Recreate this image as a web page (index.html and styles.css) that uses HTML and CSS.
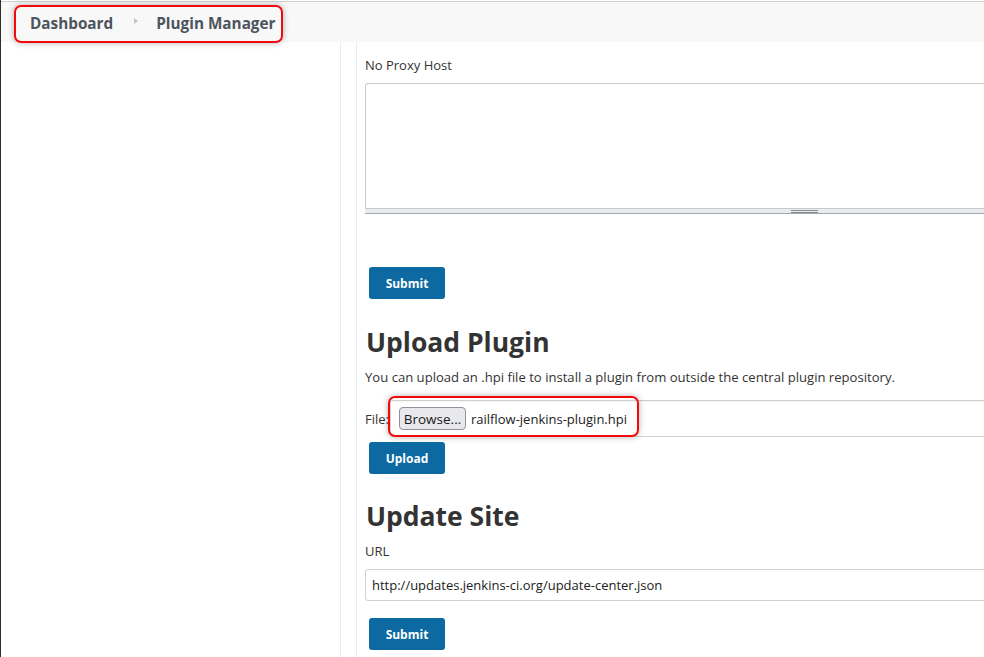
FILE: index.html
```html
<!DOCTYPE html>
<html lang="en">
<head>
<meta charset="utf-8">
<title>Plugin Manager</title>
<link rel="stylesheet" href="styles.css">
</head>
<body>
<div class="page">
  <header class="crumbs">
    <span class="crumb">Dashboard</span>
    <span class="sep"></span>
    <span class="crumb">Plugin Manager</span>
    <div class="annot annot-crumbs"></div>
  </header>
  <div class="layout">
    <aside class="side"></aside>
    <main class="main">
      <div class="label">No Proxy Host</div>
      <div class="ta-wrap">
        <textarea class="ta"></textarea>
        <div class="grip-bar"><span class="grip"></span></div>
      </div>
      <button class="btn btn-proxy">Submit</button>

      <h2 class="title">Upload Plugin</h2>
      <p class="desc">You can upload an .hpi file to install a plugin from outside the central plugin repository.</p>
      <div class="file-row">
        <span class="file-label">File:</span>
        <div class="file-box">
          <span class="browse">Browse...</span>
          <span class="fname">railflow-jenkins-plugin.hpi</span>
        </div>
        <div class="annot annot-file"></div>
      </div>
      <button class="btn btn-upload">Upload</button>

      <h2 class="title title-site">Update Site</h2>
      <div class="label label-url">URL</div>
      <div class="url-box">http://updates.jenkins-ci.org/update-center.json</div>
      <button class="btn btn-site">Submit</button>
    </main>
  </div>
</div>
</body>
</html>
```
FILE: styles.css
```css
html, body {
  margin: 0;
  padding: 0;
  background: #fff;
  overflow: hidden;
}
body {
  font-family: "Open Sans", "Noto Sans", sans-serif;
  color: #333;
  font-size: 13px;
}
.page {
  position: relative;
  height: 657px;
  border-left: 1px solid #2d2d2d;
  padding-top: 1px;
  box-sizing: border-box;
}
.crumbs {
  position: relative;
  display: flex;
  align-items: center;
  height: 41px;
  border-top: 1px solid #cfcfcf;
  background: #f8f8f8;
  padding-left: 29px;
  box-sizing: border-box;
}
.crumb {
  font-weight: 700;
  font-size: 15.3px;
  color: #4d545d;
  line-height: 20px;
  margin-top: 2px;
}
.sep {
  width: 0;
  height: 0;
  border-top: 3.5px solid transparent;
  border-bottom: 3.5px solid transparent;
  border-left: 4px solid #c4c4c4;
  margin: -3px 18px 0 21px;
}
.annot {
  position: absolute;
  border: 2px solid #f20a0a;
  border-radius: 7px;
  box-shadow: 0 0 6px rgba(0, 0, 0, 0.3);
  pointer-events: none;
}
.annot-crumbs {
  left: 13px;
  top: 3px;
  width: 265px;
  height: 34px;
}
.layout {
  display: flex;
  height: 615px;
}
.side {
  width: 339px;
  flex: none;
  border-right: 1px solid #e7edf0;
}
.main {
  flex: none;
  width: 800px;
  margin-left: 15px;
  border-left: 1px solid #e7edf0;
  padding: 13px 0 0 8px;
}
.label {
  line-height: 20px;
  color: #333;
}
.ta-wrap {
  margin-top: 8px;
  width: 760px;
}
.ta {
  display: block;
  width: 100%;
  height: 125px;
  box-sizing: border-box;
  border: 1px solid #c9c9c9;
  border-bottom: none;
  border-radius: 3px 3px 0 0;
  resize: none;
  margin: 0;
  background: #fff;
}
.grip-bar {
  height: 4px;
  border-top: 1px solid #c6c9cb;
  border-bottom: 1px solid #a3a7aa;
  background: #e9ecee;
  display: flex;
  justify-content: flex-start;
  align-items: center;
  padding-left: 426px;
}
.grip {
  width: 27px;
  height: 1px;
  border-top: 1px solid #8a8d8f;
  border-bottom: 1px solid #8a8d8f;
  margin-top: 1px;
}
.btn {
  display: block;
  width: 76px;
  height: 32px;
  margin-left: 4px;
  background: #0c69a1;
  border: none;
  border-radius: 3px;
  color: #fff;
  font-family: "Open Sans", "Noto Sans", sans-serif;
  font-weight: 700;
  font-size: 12px;
  padding: 0;
}
.btn-proxy {
  margin-top: 53px;
}
.title {
  margin: 27px 0 0 1px;
  font-size: 26.5px;
  line-height: 32px;
  font-weight: 700;
  color: #333;
}
.desc {
  margin: 9px 0 0;
  line-height: 20px;
  font-size: 13.1px;
}
.file-row {
  position: relative;
  display: flex;
  align-items: center;
  margin-top: 13px;
}
.file-label {
  width: 25px;
  flex: none;
}
.file-box {
  display: flex;
  align-items: center;
  height: 37px;
  box-sizing: border-box;
  width: 700px;
  border: 1px solid #d0d0d0;
  border-radius: 3px;
  padding-left: 8px;
  box-shadow: inset 0 1px 1px rgba(0, 0, 0, 0.04);
}
.browse {
  display: flex;
  align-items: center;
  justify-content: center;
  width: 67px;
  height: 23px;
  box-sizing: border-box;
  background: #e9e9ed;
  border: 1px solid #8f8f9d;
  border-radius: 4px;
  font-size: 13.5px;
  color: #1a1a1a;
}
.fname {
  margin-left: 5px;
  color: #222;
}
.annot-file {
  left: 23px;
  top: -4px;
  width: 247px;
  height: 37px;
}
.btn-upload {
  margin-top: 5px;
}
.title-site {
  margin-top: 26px;
}
.label-url {
  margin-top: 9px;
}
.url-box {
  margin-top: 8px;
  height: 32px;
  width: 700px;
  box-sizing: border-box;
  border: 1px solid #d0d0d0;
  border-radius: 3px;
  padding-left: 6px;
  line-height: 30px;
  color: #222;
}
.btn-site {
  margin-top: 17px;
}
```
